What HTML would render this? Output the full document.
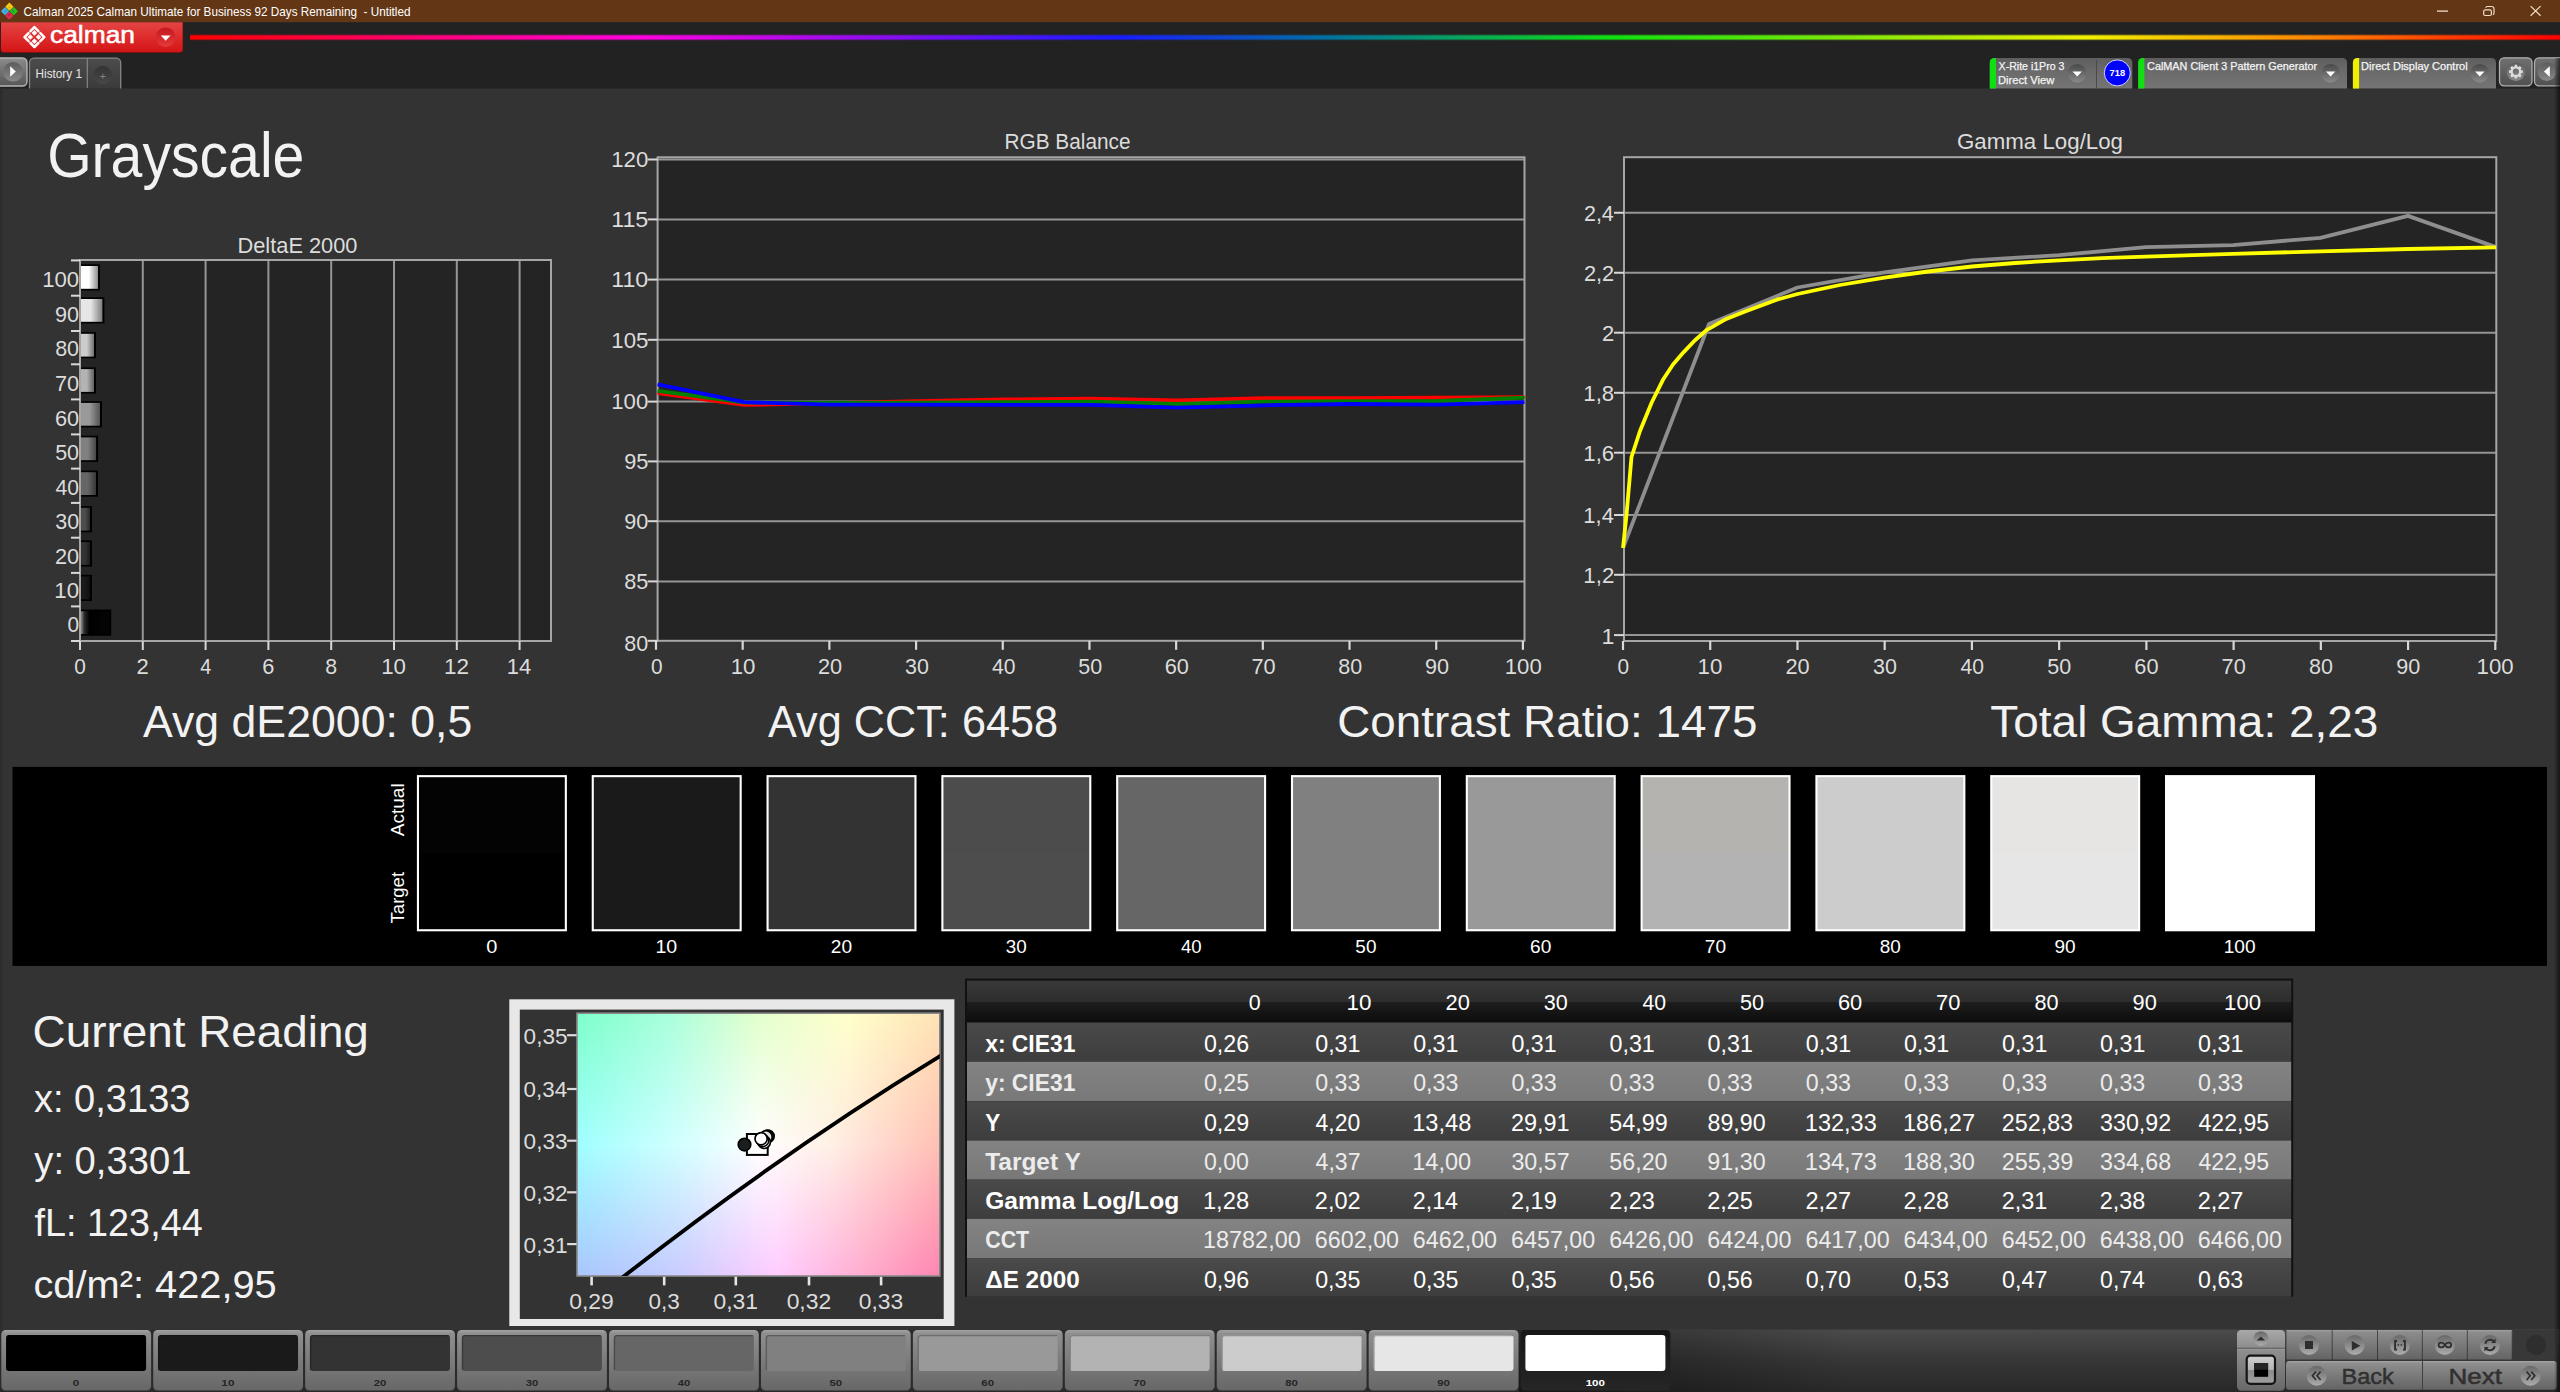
<!DOCTYPE html>
<html lang="en"><head><meta charset="utf-8"><title>Calman 2025 - Grayscale</title>
<style>html,body{margin:0;padding:0;background:#333333;overflow:hidden}svg{display:block}text{font-family:"Liberation Sans",sans-serif;white-space:pre}</style>
</head><body>
<svg width="2560" height="1392" viewBox="0 0 2560 1392">
<defs>
<linearGradient id="gRed" x1="0" y1="0" x2="0" y2="1"><stop offset="0" stop-color="#e44444"/><stop offset="0.5" stop-color="#de2c2c"/><stop offset="1" stop-color="#d31414"/></linearGradient>
<linearGradient id="gRedC" x1="0" y1="0" x2="0" y2="1"><stop offset="0" stop-color="#c41620"/><stop offset="1" stop-color="#e43a3a"/></linearGradient>
<linearGradient id="gRain" x1="0" y1="0" x2="1" y2="0"><stop offset="0" stop-color="#ff0000"/><stop offset="0.19" stop-color="#ff00e0"/><stop offset="0.39" stop-color="#1a1aff"/><stop offset="0.48" stop-color="#0070a0"/><stop offset="0.6" stop-color="#10e010"/><stop offset="0.8" stop-color="#f0f000"/><stop offset="0.9" stop-color="#ff8000"/><stop offset="1" stop-color="#ff0000"/></linearGradient>
<linearGradient id="gBtn" x1="0" y1="0" x2="0" y2="1"><stop offset="0" stop-color="#8c8c8c"/><stop offset="1" stop-color="#565656"/></linearGradient>
<linearGradient id="gBtnC" x1="0" y1="0" x2="0" y2="1"><stop offset="0" stop-color="#5c5c5c"/><stop offset="1" stop-color="#8a8a8a"/></linearGradient>
<linearGradient id="gTab" x1="0" y1="0" x2="0" y2="1"><stop offset="0" stop-color="#4c4c4c"/><stop offset="1" stop-color="#3a3a3a"/></linearGradient>
<linearGradient id="gPlus" x1="0" y1="0" x2="0" y2="1"><stop offset="0" stop-color="#333333"/><stop offset="1" stop-color="#484848"/></linearGradient>
<linearGradient id="gPanel" x1="0" y1="0" x2="0" y2="1"><stop offset="0" stop-color="#5e5e5e"/><stop offset="0.5" stop-color="#6c6c6c"/><stop offset="1" stop-color="#747474"/></linearGradient>
<linearGradient id="gDrop" x1="0" y1="0" x2="0" y2="1"><stop offset="0" stop-color="#484848"/><stop offset="1" stop-color="#8a8a8a"/></linearGradient>
<linearGradient id="gBtn2" x1="0" y1="0" x2="0" y2="1"><stop offset="0" stop-color="#707070"/><stop offset="1" stop-color="#505050"/></linearGradient>
<linearGradient id="gb0" x1="0" y1="0" x2="1" y2="0"><stop offset="0" stop-color="rgb(255,255,255)"/><stop offset="0.45" stop-color="rgb(255,255,255)"/><stop offset="1" stop-color="rgb(140,140,140)"/></linearGradient>
<linearGradient id="gb1" x1="0" y1="0" x2="1" y2="0"><stop offset="0" stop-color="rgb(230,230,230)"/><stop offset="0.45" stop-color="rgb(230,230,230)"/><stop offset="1" stop-color="rgb(126,126,126)"/></linearGradient>
<linearGradient id="gb2" x1="0" y1="0" x2="1" y2="0"><stop offset="0" stop-color="rgb(204,204,204)"/><stop offset="0.45" stop-color="rgb(204,204,204)"/><stop offset="1" stop-color="rgb(112,112,112)"/></linearGradient>
<linearGradient id="gb3" x1="0" y1="0" x2="1" y2="0"><stop offset="0" stop-color="rgb(179,179,179)"/><stop offset="0.45" stop-color="rgb(179,179,179)"/><stop offset="1" stop-color="rgb(98,98,98)"/></linearGradient>
<linearGradient id="gb4" x1="0" y1="0" x2="1" y2="0"><stop offset="0" stop-color="rgb(153,153,153)"/><stop offset="0.45" stop-color="rgb(153,153,153)"/><stop offset="1" stop-color="rgb(84,84,84)"/></linearGradient>
<linearGradient id="gb5" x1="0" y1="0" x2="1" y2="0"><stop offset="0" stop-color="rgb(128,128,128)"/><stop offset="0.45" stop-color="rgb(128,128,128)"/><stop offset="1" stop-color="rgb(70,70,70)"/></linearGradient>
<linearGradient id="gb6" x1="0" y1="0" x2="1" y2="0"><stop offset="0" stop-color="rgb(102,102,102)"/><stop offset="0.45" stop-color="rgb(102,102,102)"/><stop offset="1" stop-color="rgb(56,56,56)"/></linearGradient>
<linearGradient id="gb7" x1="0" y1="0" x2="1" y2="0"><stop offset="0" stop-color="rgb(77,77,77)"/><stop offset="0.45" stop-color="rgb(77,77,77)"/><stop offset="1" stop-color="rgb(42,42,42)"/></linearGradient>
<linearGradient id="gb8" x1="0" y1="0" x2="1" y2="0"><stop offset="0" stop-color="rgb(51,51,51)"/><stop offset="0.45" stop-color="rgb(51,51,51)"/><stop offset="1" stop-color="rgb(28,28,28)"/></linearGradient>
<linearGradient id="gb9" x1="0" y1="0" x2="1" y2="0"><stop offset="0" stop-color="rgb(26,26,26)"/><stop offset="0.45" stop-color="rgb(26,26,26)"/><stop offset="1" stop-color="rgb(14,14,14)"/></linearGradient>
<linearGradient id="gb10" x1="0" y1="0" x2="1" y2="0"><stop offset="0" stop-color="#8a8a8a"/><stop offset="0.12" stop-color="#2a2a2a"/><stop offset="0.3" stop-color="#000000"/><stop offset="1" stop-color="#050505"/></linearGradient>
<linearGradient id="cieH" x1="0" y1="0" x2="1" y2="0"><stop offset="0" stop-color="#7dffc9"/><stop offset="0.25" stop-color="#a8ffdc"/><stop offset="0.5" stop-color="#e2ffcd"/><stop offset="0.75" stop-color="#ffffcb"/><stop offset="1" stop-color="#ffe3b4"/></linearGradient>
<linearGradient id="cieB" x1="0" y1="0" x2="1" y2="0"><stop offset="0" stop-color="#a8c6ff"/><stop offset="0.28" stop-color="#c9ccff"/><stop offset="0.55" stop-color="#ffccff"/><stop offset="0.8" stop-color="#ffaacc"/><stop offset="1" stop-color="#ff85b2"/></linearGradient>
<linearGradient id="cieM" x1="0" y1="0" x2="1" y2="0"><stop offset="0" stop-color="#a0ffff"/><stop offset="0.3" stop-color="#d6ffff"/><stop offset="0.5" stop-color="#ffffff"/><stop offset="0.7" stop-color="#fff0e6"/><stop offset="1" stop-color="#ffc0b4"/></linearGradient>
<linearGradient id="mTop" x1="0" y1="0" x2="0" y2="1"><stop offset="0" stop-color="#fff" stop-opacity="1"/><stop offset="0.5" stop-color="#fff" stop-opacity="0"/></linearGradient>
<linearGradient id="mBot" x1="0" y1="0" x2="0" y2="1"><stop offset="0.5" stop-color="#fff" stop-opacity="0"/><stop offset="1" stop-color="#fff" stop-opacity="1"/></linearGradient>
<linearGradient id="thd" x1="0" y1="0" x2="0" y2="1"><stop offset="0" stop-color="#393939"/><stop offset="0.5" stop-color="#2d2d2d"/><stop offset="0.5" stop-color="#1e1e1e"/><stop offset="1" stop-color="#0c0c0c"/></linearGradient>
<linearGradient id="trD" x1="0" y1="0" x2="0" y2="1"><stop offset="0" stop-color="#4a4a4a"/><stop offset="1" stop-color="#3d3d3d"/></linearGradient>
<linearGradient id="trL" x1="0" y1="0" x2="0" y2="1"><stop offset="0" stop-color="#838383"/><stop offset="1" stop-color="#787878"/></linearGradient>
<linearGradient id="bbg" x1="0" y1="0" x2="0" y2="1"><stop offset="0" stop-color="#4b4b4b"/><stop offset="0.5" stop-color="#363636"/><stop offset="1" stop-color="#282828"/></linearGradient>
<linearGradient id="bfade" x1="0" y1="0" x2="1" y2="0"><stop offset="0" stop-color="#000" stop-opacity="0.45"/><stop offset="1" stop-color="#000" stop-opacity="0"/></linearGradient>
<linearGradient id="bbt" x1="0" y1="0" x2="0" y2="1"><stop offset="0" stop-color="#a2a2a2"/><stop offset="0.06" stop-color="#8e8e8e"/><stop offset="0.5" stop-color="#7c7c7c"/><stop offset="1" stop-color="#676767"/></linearGradient>
<linearGradient id="bsel" x1="0" y1="0" x2="0" y2="1"><stop offset="0" stop-color="#161616"/><stop offset="1" stop-color="#262626"/></linearGradient>
<linearGradient id="cbt" x1="0" y1="0" x2="0" y2="1"><stop offset="0" stop-color="#a0a0a0"/><stop offset="0.08" stop-color="#8c8c8c"/><stop offset="1" stop-color="#646464"/></linearGradient>
<linearGradient id="cci" x1="0" y1="0" x2="0" y2="1"><stop offset="0" stop-color="#686868"/><stop offset="1" stop-color="#acacac"/></linearGradient>
<linearGradient id="cbt2" x1="0" y1="0" x2="0" y2="1"><stop offset="0" stop-color="#a8a8a8"/><stop offset="0.3" stop-color="#8c8c8c"/><stop offset="0.31" stop-color="#909090"/><stop offset="1" stop-color="#686868"/></linearGradient>
<linearGradient id="stp" x1="0" y1="0" x2="0" y2="1"><stop offset="0" stop-color="#d0d0d0"/><stop offset="0.5" stop-color="#b4b4b4"/><stop offset="0.5" stop-color="#8c8c8c"/><stop offset="1" stop-color="#a0a0a0"/></linearGradient>
<linearGradient id="bn" x1="0" y1="0" x2="0" y2="1"><stop offset="0" stop-color="#a6a6a6"/><stop offset="0.08" stop-color="#8e8e8e"/><stop offset="1" stop-color="#646464"/></linearGradient>
<linearGradient id="rsh" x1="0" y1="0" x2="1" y2="0"><stop offset="0" stop-color="#000" stop-opacity="0"/><stop offset="1" stop-color="#000" stop-opacity="0.6"/></linearGradient>
</defs>
<rect x="0" y="0" width="2560" height="1392" fill="#333333"/>
<rect x="0" y="0" width="2560" height="22.3" fill="#633615"/>
<rect x="0" y="22.3" width="2560" height="66.2" fill="#222222"/>
<rect x="0" y="88.5" width="2.2" height="1241" fill="#2c2c2c"/>
<path d="M9.4 2.6L13.5 6.7L9.4 10.8L5.3 6.7Z" fill="#f4cf1e"/>
<path d="M5 7.1L9.1 11.2L5 15.3L0.9 11.2Z" fill="#3fb6ea"/>
<path d="M13.8 7.1L17.9 11.2L13.8 15.3L9.7 11.2Z" fill="#27c527"/>
<path d="M9.3 11.6L13.4 15.7L9.3 19.8L5.2 15.7Z" fill="#e22c58"/>
<path d="M9.4 5.9L10.9 7.4L9.4 8.9L7.9 7.4Z" fill="#e0b400"/>
<path d="M5.6 9.7L7.1 11.2L5.6 12.7L4.1 11.2Z" fill="#2aa0d8"/>
<path d="M13.2 9.7L14.7 11.2L13.2 12.7L11.7 11.2Z" fill="#14a814"/>
<path d="M9.3 13.5L10.8 15L9.3 16.5L7.8 15Z" fill="#cc1844"/>
<text x="23.5" y="16" font-size="12.4" fill="#ffffff" textLength="387" lengthAdjust="spacingAndGlyphs" xml:space="preserve">Calman 2025 Calman Ultimate for Business 92 Days Remaining  - Untitled</text>
<line x1="2437" y1="11.1" x2="2448" y2="11.1" stroke="#f2dcc6" stroke-width="1.3" />
<rect x="2483.7" y="9.9" width="7.7" height="5.6" rx="1.5" fill="none" stroke="#f2dcc6" stroke-width="1.2"/>
<path d="M2485.7 7.7a1.7 1.7 0 0 1 1.6-1.2h4.4a2.3 2.3 0 0 1 2.3 2.3v4.2a1.7 1.7 0 0 1-1.2 1.6" fill="none" stroke="#f2dcc6" stroke-width="1.2"/>
<path d="M2530.6 6.1l10 9.7M2540.6 6.1l-10 9.7" stroke="#f2dcc6" stroke-width="1.2" fill="none"/>
<path d="M0.5 22.3H183.3V49.5a3.5 3.5 0 0 1-3.5 3.5H4a3.5 3.5 0 0 1-3.5-3.5Z" fill="#5a1414"/>
<path d="M1 22.3H182.6V49a3.3 3.3 0 0 1-3.3 3.3H4.3A3.3 3.3 0 0 1 1 49Z" fill="url(#gRed)"/>
<path d="M34.4 30.35L36.95 32.9L34.4 35.45L31.85 32.9Z" fill="#ffffff" stroke="#ffffff" stroke-width="0.5" stroke-linejoin="round"/>
<path d="M30.25 34.5L32.8 37.05L30.25 39.6L27.7 37.05Z" fill="#ffffff" stroke="#ffffff" stroke-width="0.5" stroke-linejoin="round"/>
<path d="M38.55 34.5L41.1 37.05L38.55 39.6L36 37.05Z" fill="#ffffff" stroke="#ffffff" stroke-width="0.5" stroke-linejoin="round"/>
<path d="M34.4 38.65L36.95 41.2L34.4 43.75L31.85 41.2Z" fill="#ffffff" stroke="#ffffff" stroke-width="0.5" stroke-linejoin="round"/>
<path d="M30.4 31.1L34.4 27.1L38.4 31.1 M28.5 33.05L24.5 37.05L28.5 41.05 M40.3 33.05L44.3 37.05L40.3 41.05 M30.4 43L34.4 47L38.4 43" fill="none" stroke="#ffffff" stroke-width="2.5" stroke-linecap="round" stroke-linejoin="round"/>
<text x="50" y="43.4" font-size="24.6" fill="#ffffff" textLength="85" lengthAdjust="spacingAndGlyphs" stroke="#ffffff" stroke-width="0.55">calman</text>
<circle cx="165.7" cy="37.3" r="9.8" fill="url(#gRedC)"/>
<path d="M160.8 35.6h9.8l-4.9 5.2Z" fill="#ffffff"/>
<rect x="190" y="34.6" width="2370" height="5.6" fill="url(#gRain)" opacity="0.55"/>
<rect x="190" y="35.6" width="2370" height="3.6" fill="url(#gRain)"/>
<path d="M-2 58H22.5a4.5 4.5 0 0 1 4.5 4.5V81.5a4.5 4.5 0 0 1-4.5 4.5H-2Z" fill="url(#gBtn)" stroke="#b6b6b6" stroke-width="1.4"/>
<circle cx="13" cy="71.8" r="9.8" fill="url(#gBtnC)"/>
<path d="M10.2 66.3l5.6 5.2l-5.6 5.2Z" fill="#ffffff"/>
<path d="M29.5 88.5V62.6a4.5 4.5 0 0 1 4.5-4.5H116.2a4.5 4.5 0 0 1 4.5 4.5V88.5Z" fill="url(#gTab)"/>
<path d="M29.5 88.5V62.6a4.5 4.5 0 0 1 4.5-4.5H116.2a4.5 4.5 0 0 1 4.5 4.5V88.5" fill="none" stroke="#868686" stroke-width="1.3"/>
<line x1="87.3" y1="58.6" x2="87.3" y2="88" stroke="#868686" stroke-width="1.2" />
<text x="35.5" y="78.2" font-size="12.6" fill="#e6e6e6" textLength="46.5" lengthAdjust="spacingAndGlyphs">History 1</text>
<circle cx="102.7" cy="75" r="9.3" fill="url(#gPlus)"/>
<text x="102.7" y="79.6" font-size="10.5" fill="#848484" text-anchor="middle">+</text>
<path d="M1989.8 88.5V62.5a4.5 4.5 0 0 1 4.5-4.5H2127.8a4.5 4.5 0 0 1 4.5 4.5V88.5Z" fill="url(#gPanel)"/>
<path d="M1989.8 88.5V62.5a4.5 4.5 0 0 1 4.5-4.5H1996V88.5Z" fill="#10e010"/>
<text x="1998.59" y="69.5" font-size="11" fill="#f4f4f4" textLength="65.8329" lengthAdjust="spacingAndGlyphs" stroke="#f4f4f4" stroke-width="0.25">X-Rite i1Pro 3</text>
<text x="1997.9" y="83.6" font-size="11" fill="#f4f4f4" textLength="56.4828" lengthAdjust="spacingAndGlyphs" stroke="#f4f4f4" stroke-width="0.25">Direct View</text>
<circle cx="2077.2" cy="73.2" r="9.3" fill="url(#gDrop)"/>
<path d="M2072.5 71.6h9.4l-4.7 4.8Z" fill="#ffffff"/>
<line x1="2096.5" y1="60" x2="2096.5" y2="88.5" stroke="#4a4a4a" stroke-width="1" />
<circle cx="2117.3" cy="72.9" r="13" fill="#0000ff" stroke="#d0d0ff" stroke-width="1"/>
<text x="2109.62" y="76" font-size="8.8" fill="#ffffff" font-weight="bold" textLength="15.6423" lengthAdjust="spacingAndGlyphs">718</text>
<path d="M2138.2 88.5V62.5a4.5 4.5 0 0 1 4.5-4.5H2342.5a4.5 4.5 0 0 1 4.5 4.5V88.5Z" fill="url(#gPanel)"/>
<path d="M2138.2 88.5V62.5a4.5 4.5 0 0 1 4.5-4.5H2144.4V88.5Z" fill="#10e010"/>
<text x="2147.06" y="69.5" font-size="11" fill="#f4f4f4" textLength="170.092" lengthAdjust="spacingAndGlyphs" stroke="#f4f4f4" stroke-width="0.25">CalMAN Client 3 Pattern Generator</text>
<circle cx="2330.6" cy="73.2" r="9.3" fill="url(#gDrop)"/>
<path d="M2325.9 71.6h9.4l-4.7 4.8Z" fill="#ffffff"/>
<path d="M2352.9 88.5V62.5a4.5 4.5 0 0 1 4.5-4.5H2491.5a4.5 4.5 0 0 1 4.5 4.5V88.5Z" fill="url(#gPanel)"/>
<path d="M2352.9 88.5V62.5a4.5 4.5 0 0 1 4.5-4.5H2359.1V88.5Z" fill="#f0f000"/>
<text x="2361.12" y="69.5" font-size="11" fill="#f4f4f4" textLength="106.539" lengthAdjust="spacingAndGlyphs" stroke="#f4f4f4" stroke-width="0.25">Direct Display Control</text>
<circle cx="2479.8" cy="73.2" r="9.3" fill="url(#gDrop)"/>
<path d="M2475.1 71.6h9.4l-4.7 4.8Z" fill="#ffffff"/>
<rect x="2499.5" y="57.8" width="32.5" height="28" rx="4.5" fill="url(#gBtn2)" stroke="#b0b0b0" stroke-width="1.3"/>
<circle cx="2515.9" cy="71.7" r="9.3" fill="url(#gBtnC)"/>
<path d="M2522.80 70.52L2522.80 72.88L2520.95 73.32L2520.61 74.13L2521.62 75.74L2519.94 77.42L2518.33 76.41L2517.52 76.75L2517.08 78.60L2514.72 78.60L2514.28 76.75L2513.47 76.41L2511.86 77.42L2510.18 75.74L2511.19 74.13L2510.85 73.32L2509.00 72.88L2509.00 70.52L2510.85 70.08L2511.19 69.27L2510.18 67.66L2511.86 65.98L2513.47 66.99L2514.28 66.65L2514.72 64.80L2517.08 64.80L2517.52 66.65L2518.33 66.99L2519.94 65.98L2521.62 67.66L2520.61 69.27L2520.95 70.08Z M2519 71.7a3.1 3.1 0 1 0 -6.2 0a3.1 3.1 0 1 0 6.2 0Z" fill="#dcdcdc" fill-rule="evenodd"/>
<rect x="2534.5" y="57.8" width="34" height="28" rx="4.5" fill="url(#gBtn2)" stroke="#b0b0b0" stroke-width="1.3"/>
<circle cx="2546.8" cy="71.7" r="9.3" fill="url(#gBtnC)"/>
<path d="M2549.8 66.3l-5.8 5.3l5.8 5.3Z" fill="#ffffff"/>
<text x="47.1429" y="177" font-size="62.6" fill="#f2f2f2" textLength="257.232" lengthAdjust="spacingAndGlyphs">Grayscale</text>
<rect x="80" y="260" width="471" height="381" fill="#242424"/>
<text x="297.5" y="252.6" font-size="21.8" fill="#dcdcdc" text-anchor="middle" textLength="120" lengthAdjust="spacingAndGlyphs">DeltaE 2000</text>
<line x1="142.8" y1="260" x2="142.8" y2="641" stroke="#969696" stroke-width="2" />
<line x1="205.6" y1="260" x2="205.6" y2="641" stroke="#969696" stroke-width="2" />
<line x1="268.4" y1="260" x2="268.4" y2="641" stroke="#969696" stroke-width="2" />
<line x1="331.2" y1="260" x2="331.2" y2="641" stroke="#969696" stroke-width="2" />
<line x1="394" y1="260" x2="394" y2="641" stroke="#969696" stroke-width="2" />
<line x1="456.8" y1="260" x2="456.8" y2="641" stroke="#969696" stroke-width="2" />
<line x1="519.6" y1="260" x2="519.6" y2="641" stroke="#969696" stroke-width="2" />
<path d="M80 641V260H551V641" fill="none" stroke="#a6a6a6" stroke-width="2"/>
<line x1="79" y1="641" x2="552" y2="641" stroke="#a6a6a6" stroke-width="2" />
<line x1="71" y1="260.4" x2="80" y2="260.4" stroke="#d8d8d8" stroke-width="2" />
<rect x="81" y="264.3" width="19" height="26.2" fill="#000000"/>
<rect x="81" y="266" width="17" height="22.8" fill="url(#gb0)"/>
<text x="42.1888" y="286.85" font-size="21.8" fill="#dcdcdc" textLength="36.9644" lengthAdjust="spacingAndGlyphs">100</text>
<line x1="71" y1="295.7" x2="80" y2="295.7" stroke="#d8d8d8" stroke-width="2" />
<rect x="81" y="297.3" width="23.4" height="26.2" fill="#000000"/>
<rect x="81" y="299" width="21.4" height="22.8" fill="url(#gb1)"/>
<text x="55.0399" y="322.15" font-size="21.8" fill="#dcdcdc" textLength="24.0681" lengthAdjust="spacingAndGlyphs">90</text>
<line x1="71" y1="331" x2="80" y2="331" stroke="#d8d8d8" stroke-width="2" />
<rect x="81" y="332.1" width="15" height="26.2" fill="#000000"/>
<rect x="81" y="333.8" width="13" height="22.8" fill="url(#gb2)"/>
<text x="55.1523" y="356.45" font-size="21.8" fill="#dcdcdc" textLength="23.9518" lengthAdjust="spacingAndGlyphs">80</text>
<line x1="71" y1="364.3" x2="80" y2="364.3" stroke="#d8d8d8" stroke-width="2" />
<rect x="81" y="367.4" width="15" height="26.2" fill="#000000"/>
<rect x="81" y="369.1" width="13" height="22.8" fill="url(#gb3)"/>
<text x="54.9265" y="390.65" font-size="21.8" fill="#dcdcdc" textLength="24.1855" lengthAdjust="spacingAndGlyphs">70</text>
<line x1="71" y1="399.4" x2="80" y2="399.4" stroke="#d8d8d8" stroke-width="2" />
<rect x="81" y="401.2" width="21" height="26.2" fill="#000000"/>
<rect x="81" y="402.9" width="19" height="22.8" fill="url(#gb4)"/>
<text x="54.9265" y="425.7" font-size="21.8" fill="#dcdcdc" textLength="24.1855" lengthAdjust="spacingAndGlyphs">60</text>
<line x1="71" y1="434.4" x2="80" y2="434.4" stroke="#d8d8d8" stroke-width="2" />
<rect x="81" y="435.7" width="17.1" height="26.2" fill="#000000"/>
<rect x="81" y="437.4" width="15.1" height="22.8" fill="url(#gb5)"/>
<text x="55.1523" y="460.3" font-size="21.8" fill="#dcdcdc" textLength="23.9518" lengthAdjust="spacingAndGlyphs">50</text>
<line x1="71" y1="468.6" x2="80" y2="468.6" stroke="#d8d8d8" stroke-width="2" />
<rect x="81" y="470.5" width="17" height="26.2" fill="#000000"/>
<rect x="81" y="472.2" width="15" height="22.8" fill="url(#gb6)"/>
<text x="55.5911" y="494.55" font-size="21.8" fill="#dcdcdc" textLength="23.4978" lengthAdjust="spacingAndGlyphs">40</text>
<line x1="71" y1="502.9" x2="80" y2="502.9" stroke="#d8d8d8" stroke-width="2" />
<rect x="81" y="506.1" width="11" height="26.2" fill="#000000"/>
<rect x="81" y="507.8" width="9" height="22.8" fill="url(#gb7)"/>
<text x="55.2636" y="529.1" font-size="21.8" fill="#dcdcdc" textLength="23.8367" lengthAdjust="spacingAndGlyphs">30</text>
<line x1="71" y1="537.7" x2="80" y2="537.7" stroke="#d8d8d8" stroke-width="2" />
<rect x="81" y="540.4" width="11" height="26.2" fill="#000000"/>
<rect x="81" y="542.1" width="9" height="22.8" fill="url(#gb8)"/>
<text x="54.9265" y="564.1" font-size="21.8" fill="#dcdcdc" textLength="24.1855" lengthAdjust="spacingAndGlyphs">20</text>
<line x1="71" y1="572.9" x2="80" y2="572.9" stroke="#d8d8d8" stroke-width="2" />
<rect x="81" y="574.8" width="11" height="26.2" fill="#000000"/>
<rect x="81" y="576.5" width="9" height="22.8" fill="url(#gb9)"/>
<text x="54.3421" y="598.45" font-size="21.8" fill="#dcdcdc" textLength="24.7901" lengthAdjust="spacingAndGlyphs">10</text>
<line x1="71" y1="606.4" x2="80" y2="606.4" stroke="#d8d8d8" stroke-width="2" />
<rect x="81" y="609.55" width="30.2" height="26.2" fill="#000000"/>
<rect x="81" y="611.25" width="28.2" height="22.8" fill="url(#gb10)"/>
<text x="67.4463" y="632.45" font-size="21.8" fill="#dcdcdc" textLength="11.6087" lengthAdjust="spacingAndGlyphs">0</text>
<line x1="71" y1="641" x2="80" y2="641" stroke="#d8d8d8" stroke-width="2" />
<line x1="80" y1="641" x2="80" y2="650" stroke="#d8d8d8" stroke-width="2" />
<text x="74.2079" y="673.5" font-size="21.8" fill="#dcdcdc" textLength="11.6087" lengthAdjust="spacingAndGlyphs">0</text>
<line x1="142.8" y1="641" x2="142.8" y2="650" stroke="#d8d8d8" stroke-width="2" />
<text x="136.638" y="673.5" font-size="21.8" fill="#dcdcdc" textLength="12.2397" lengthAdjust="spacingAndGlyphs">2</text>
<line x1="205.6" y1="641" x2="205.6" y2="650" stroke="#d8d8d8" stroke-width="2" />
<text x="200.141" y="673.5" font-size="21.8" fill="#dcdcdc" textLength="11.0397" lengthAdjust="spacingAndGlyphs">4</text>
<line x1="268.4" y1="641" x2="268.4" y2="650" stroke="#d8d8d8" stroke-width="2" />
<text x="262.25" y="673.5" font-size="21.8" fill="#dcdcdc" textLength="12.108" lengthAdjust="spacingAndGlyphs">6</text>
<line x1="331.2" y1="641" x2="331.2" y2="650" stroke="#d8d8d8" stroke-width="2" />
<text x="325.286" y="673.5" font-size="21.8" fill="#dcdcdc" textLength="11.8531" lengthAdjust="spacingAndGlyphs">8</text>
<line x1="394" y1="641" x2="394" y2="650" stroke="#d8d8d8" stroke-width="2" />
<text x="381.185" y="673.5" font-size="21.8" fill="#dcdcdc" textLength="24.7901" lengthAdjust="spacingAndGlyphs">10</text>
<line x1="456.8" y1="641" x2="456.8" y2="650" stroke="#d8d8d8" stroke-width="2" />
<text x="443.968" y="673.5" font-size="21.8" fill="#dcdcdc" textLength="25.0405" lengthAdjust="spacingAndGlyphs">12</text>
<line x1="519.6" y1="641" x2="519.6" y2="650" stroke="#d8d8d8" stroke-width="2" />
<text x="506.802" y="673.5" font-size="21.8" fill="#dcdcdc" textLength="24.5447" lengthAdjust="spacingAndGlyphs">14</text>
<rect x="657.6" y="157.3" width="866.9" height="483.5" fill="#242424"/>
<text x="1067.5" y="149.3" font-size="21.8" fill="#dcdcdc" text-anchor="middle" textLength="126" lengthAdjust="spacingAndGlyphs">RGB Balance</text>
<line x1="657.6" y1="581.4" x2="1524.5" y2="581.4" stroke="#969696" stroke-width="2" />
<line x1="657.6" y1="521.2" x2="1524.5" y2="521.2" stroke="#969696" stroke-width="2" />
<line x1="657.6" y1="461.4" x2="1524.5" y2="461.4" stroke="#969696" stroke-width="2" />
<line x1="657.6" y1="401.6" x2="1524.5" y2="401.6" stroke="#969696" stroke-width="2" />
<line x1="657.6" y1="339.8" x2="1524.5" y2="339.8" stroke="#969696" stroke-width="2" />
<line x1="657.6" y1="279.6" x2="1524.5" y2="279.6" stroke="#969696" stroke-width="2" />
<line x1="657.6" y1="219.4" x2="1524.5" y2="219.4" stroke="#969696" stroke-width="2" />
<line x1="657.6" y1="159.5" x2="1524.5" y2="159.5" stroke="#969696" stroke-width="2" />
<rect x="657.6" y="157.3" width="866.9" height="483.5" fill="none" stroke="#a6a6a6" stroke-width="2"/>
<line x1="647.6" y1="640.8" x2="657.6" y2="640.8" stroke="#d8d8d8" stroke-width="2" />
<text x="624.252" y="651" font-size="21.8" fill="#dcdcdc" textLength="23.9518" lengthAdjust="spacingAndGlyphs">80</text>
<line x1="647.6" y1="581.4" x2="657.6" y2="581.4" stroke="#d8d8d8" stroke-width="2" />
<text x="624.248" y="589.1" font-size="21.8" fill="#dcdcdc" textLength="24.0681" lengthAdjust="spacingAndGlyphs">85</text>
<line x1="647.6" y1="521.2" x2="657.6" y2="521.2" stroke="#d8d8d8" stroke-width="2" />
<text x="624.14" y="528.9" font-size="21.8" fill="#dcdcdc" textLength="24.0681" lengthAdjust="spacingAndGlyphs">90</text>
<line x1="647.6" y1="461.4" x2="657.6" y2="461.4" stroke="#d8d8d8" stroke-width="2" />
<text x="624.135" y="469.1" font-size="21.8" fill="#dcdcdc" textLength="24.1855" lengthAdjust="spacingAndGlyphs">95</text>
<line x1="647.6" y1="401.6" x2="657.6" y2="401.6" stroke="#d8d8d8" stroke-width="2" />
<text x="611.289" y="409.3" font-size="21.8" fill="#dcdcdc" textLength="36.9644" lengthAdjust="spacingAndGlyphs">100</text>
<line x1="647.6" y1="339.8" x2="657.6" y2="339.8" stroke="#d8d8d8" stroke-width="2" />
<text x="611.283" y="347.5" font-size="21.8" fill="#dcdcdc" textLength="37.0837" lengthAdjust="spacingAndGlyphs">105</text>
<line x1="647.6" y1="279.6" x2="657.6" y2="279.6" stroke="#d8d8d8" stroke-width="2" />
<text x="611.211" y="287.3" font-size="21.8" fill="#dcdcdc" textLength="36.9851" lengthAdjust="spacingAndGlyphs">110</text>
<line x1="647.6" y1="219.4" x2="657.6" y2="219.4" stroke="#d8d8d8" stroke-width="2" />
<text x="611.205" y="227.1" font-size="21.8" fill="#dcdcdc" textLength="37.1101" lengthAdjust="spacingAndGlyphs">115</text>
<line x1="647.6" y1="159.5" x2="657.6" y2="159.5" stroke="#d8d8d8" stroke-width="2" />
<text x="611.289" y="167.2" font-size="21.8" fill="#dcdcdc" textLength="36.9644" lengthAdjust="spacingAndGlyphs">120</text>
<line x1="656" y1="640.8" x2="656" y2="649.8" stroke="#d8d8d8" stroke-width="2.2" />
<text x="651.008" y="673.7" font-size="21.8" fill="#dcdcdc" textLength="11.6087" lengthAdjust="spacingAndGlyphs">0</text>
<line x1="742.69" y1="640.8" x2="742.69" y2="649.8" stroke="#d8d8d8" stroke-width="2.2" />
<text x="730.675" y="673.7" font-size="21.8" fill="#dcdcdc" textLength="24.7901" lengthAdjust="spacingAndGlyphs">10</text>
<line x1="829.38" y1="640.8" x2="829.38" y2="649.8" stroke="#d8d8d8" stroke-width="2.2" />
<text x="817.95" y="673.7" font-size="21.8" fill="#dcdcdc" textLength="24.1855" lengthAdjust="spacingAndGlyphs">20</text>
<line x1="916.07" y1="640.8" x2="916.07" y2="649.8" stroke="#d8d8d8" stroke-width="2.2" />
<text x="904.977" y="673.7" font-size="21.8" fill="#dcdcdc" textLength="23.8367" lengthAdjust="spacingAndGlyphs">30</text>
<line x1="1002.76" y1="640.8" x2="1002.76" y2="649.8" stroke="#d8d8d8" stroke-width="2.2" />
<text x="991.994" y="673.7" font-size="21.8" fill="#dcdcdc" textLength="23.4978" lengthAdjust="spacingAndGlyphs">40</text>
<line x1="1089.45" y1="640.8" x2="1089.45" y2="649.8" stroke="#d8d8d8" stroke-width="2.2" />
<text x="1078.25" y="673.7" font-size="21.8" fill="#dcdcdc" textLength="23.9518" lengthAdjust="spacingAndGlyphs">50</text>
<line x1="1176.14" y1="640.8" x2="1176.14" y2="649.8" stroke="#d8d8d8" stroke-width="2.2" />
<text x="1164.71" y="673.7" font-size="21.8" fill="#dcdcdc" textLength="24.1855" lengthAdjust="spacingAndGlyphs">60</text>
<line x1="1262.83" y1="640.8" x2="1262.83" y2="649.8" stroke="#d8d8d8" stroke-width="2.2" />
<text x="1251.4" y="673.7" font-size="21.8" fill="#dcdcdc" textLength="24.1855" lengthAdjust="spacingAndGlyphs">70</text>
<line x1="1349.52" y1="640.8" x2="1349.52" y2="649.8" stroke="#d8d8d8" stroke-width="2.2" />
<text x="1338.32" y="673.7" font-size="21.8" fill="#dcdcdc" textLength="23.9518" lengthAdjust="spacingAndGlyphs">80</text>
<line x1="1436.21" y1="640.8" x2="1436.21" y2="649.8" stroke="#d8d8d8" stroke-width="2.2" />
<text x="1424.89" y="673.7" font-size="21.8" fill="#dcdcdc" textLength="24.0681" lengthAdjust="spacingAndGlyphs">90</text>
<line x1="1522.9" y1="640.8" x2="1522.9" y2="649.8" stroke="#d8d8d8" stroke-width="2.2" />
<text x="1504.81" y="673.7" font-size="21.8" fill="#dcdcdc" textLength="36.9644" lengthAdjust="spacingAndGlyphs">100</text>
<clipPath id="cpRGB"><rect x="656.6" y="157.3" width="868.9" height="483.5"/></clipPath>
<polyline points="657.6,393.2 744.3,404.9 831.0,403.2 917.7,401.2 1004.4,399.5 1091.0,398.6 1177.7,400.3 1264.4,398.1 1351.1,398.1 1437.8,397.7 1524.5,397.2" fill="none" stroke="#ff0000" stroke-width="3.8" stroke-linejoin="round" clip-path="url(#cpRGB)"/>
<polyline points="657.6,390.9 744.3,402.6 831.0,403.0 917.7,402.6 1004.4,402.2 1091.0,401.7 1177.7,404.0 1264.4,401.7 1351.1,401.2 1437.8,401.0 1524.5,397.7" fill="none" stroke="#008000" stroke-width="3.8" stroke-linejoin="round" clip-path="url(#cpRGB)"/>
<polyline points="657.6,384.3 744.3,402.2 831.0,404.6 917.7,404.6 1004.4,404.9 1091.0,404.9 1177.7,407.6 1264.4,405.3 1351.1,404.0 1437.8,404.6 1524.5,402.2" fill="none" stroke="#0000ff" stroke-width="3.8" stroke-linejoin="round" clip-path="url(#cpRGB)"/>
<rect x="1624" y="157.2" width="872.3" height="483.8" fill="#242424"/>
<text x="2040" y="149.3" font-size="21.8" fill="#dcdcdc" text-anchor="middle" textLength="166" lengthAdjust="spacingAndGlyphs">Gamma Log/Log</text>
<line x1="1624" y1="212.75" x2="2496.3" y2="212.75" stroke="#969696" stroke-width="2" />
<line x1="1624" y1="272.75" x2="2496.3" y2="272.75" stroke="#969696" stroke-width="2" />
<line x1="1624" y1="332.7" x2="2496.3" y2="332.7" stroke="#969696" stroke-width="2" />
<line x1="1624" y1="392.8" x2="2496.3" y2="392.8" stroke="#969696" stroke-width="2" />
<line x1="1624" y1="452.7" x2="2496.3" y2="452.7" stroke="#969696" stroke-width="2" />
<line x1="1624" y1="515" x2="2496.3" y2="515" stroke="#969696" stroke-width="2" />
<line x1="1624" y1="574.8" x2="2496.3" y2="574.8" stroke="#969696" stroke-width="2" />
<line x1="1624" y1="635.1" x2="2496.3" y2="635.1" stroke="#969696" stroke-width="2" />
<rect x="1624" y="157.2" width="872.3" height="483.8" fill="none" stroke="#a6a6a6" stroke-width="2"/>
<line x1="1614" y1="212.75" x2="1624" y2="212.75" stroke="#d8d8d8" stroke-width="2" />
<text x="1583.95" y="221.15" font-size="21.8" fill="#dcdcdc" textLength="29.8904" lengthAdjust="spacingAndGlyphs">2,4</text>
<line x1="1614" y1="272.75" x2="1624" y2="272.75" stroke="#d8d8d8" stroke-width="2" />
<text x="1583.93" y="281.15" font-size="21.8" fill="#dcdcdc" textLength="30.352" lengthAdjust="spacingAndGlyphs">2,2</text>
<line x1="1614" y1="332.7" x2="1624" y2="332.7" stroke="#d8d8d8" stroke-width="2" />
<text x="1602.08" y="341.1" font-size="21.8" fill="#dcdcdc" textLength="12.2397" lengthAdjust="spacingAndGlyphs">2</text>
<line x1="1614" y1="392.8" x2="1624" y2="392.8" stroke="#d8d8d8" stroke-width="2" />
<text x="1583.36" y="401.2" font-size="21.8" fill="#dcdcdc" textLength="30.8281" lengthAdjust="spacingAndGlyphs">1,8</text>
<line x1="1614" y1="452.7" x2="1624" y2="452.7" stroke="#d8d8d8" stroke-width="2" />
<text x="1583.36" y="461.1" font-size="21.8" fill="#dcdcdc" textLength="30.8281" lengthAdjust="spacingAndGlyphs">1,6</text>
<line x1="1614" y1="515" x2="1624" y2="515" stroke="#d8d8d8" stroke-width="2" />
<text x="1583.38" y="523.4" font-size="21.8" fill="#dcdcdc" textLength="30.4696" lengthAdjust="spacingAndGlyphs">1,4</text>
<line x1="1614" y1="574.8" x2="1624" y2="574.8" stroke="#d8d8d8" stroke-width="2" />
<text x="1583.36" y="583.2" font-size="21.8" fill="#dcdcdc" textLength="30.9495" lengthAdjust="spacingAndGlyphs">1,2</text>
<line x1="1614" y1="635.1" x2="1624" y2="635.1" stroke="#d8d8d8" stroke-width="2" />
<text x="1601.43" y="643.5" font-size="21.8" fill="#dcdcdc" textLength="12.9431" lengthAdjust="spacingAndGlyphs">1</text>
<line x1="1623" y1="641" x2="1623" y2="650" stroke="#d8d8d8" stroke-width="2.2" />
<text x="1617.41" y="673.7" font-size="21.8" fill="#dcdcdc" textLength="11.6087" lengthAdjust="spacingAndGlyphs">0</text>
<line x1="1710.23" y1="641" x2="1710.23" y2="650" stroke="#d8d8d8" stroke-width="2.2" />
<text x="1697.62" y="673.7" font-size="21.8" fill="#dcdcdc" textLength="24.7901" lengthAdjust="spacingAndGlyphs">10</text>
<line x1="1797.46" y1="641" x2="1797.46" y2="650" stroke="#d8d8d8" stroke-width="2.2" />
<text x="1785.43" y="673.7" font-size="21.8" fill="#dcdcdc" textLength="24.1855" lengthAdjust="spacingAndGlyphs">20</text>
<line x1="1884.69" y1="641" x2="1884.69" y2="650" stroke="#d8d8d8" stroke-width="2.2" />
<text x="1873" y="673.7" font-size="21.8" fill="#dcdcdc" textLength="23.8367" lengthAdjust="spacingAndGlyphs">30</text>
<line x1="1971.92" y1="641" x2="1971.92" y2="650" stroke="#d8d8d8" stroke-width="2.2" />
<text x="1960.55" y="673.7" font-size="21.8" fill="#dcdcdc" textLength="23.4978" lengthAdjust="spacingAndGlyphs">40</text>
<line x1="2059.15" y1="641" x2="2059.15" y2="650" stroke="#d8d8d8" stroke-width="2.2" />
<text x="2047.35" y="673.7" font-size="21.8" fill="#dcdcdc" textLength="23.9518" lengthAdjust="spacingAndGlyphs">50</text>
<line x1="2146.38" y1="641" x2="2146.38" y2="650" stroke="#d8d8d8" stroke-width="2.2" />
<text x="2134.35" y="673.7" font-size="21.8" fill="#dcdcdc" textLength="24.1855" lengthAdjust="spacingAndGlyphs">60</text>
<line x1="2233.61" y1="641" x2="2233.61" y2="650" stroke="#d8d8d8" stroke-width="2.2" />
<text x="2221.58" y="673.7" font-size="21.8" fill="#dcdcdc" textLength="24.1855" lengthAdjust="spacingAndGlyphs">70</text>
<line x1="2320.84" y1="641" x2="2320.84" y2="650" stroke="#d8d8d8" stroke-width="2.2" />
<text x="2309.04" y="673.7" font-size="21.8" fill="#dcdcdc" textLength="23.9518" lengthAdjust="spacingAndGlyphs">80</text>
<line x1="2408.07" y1="641" x2="2408.07" y2="650" stroke="#d8d8d8" stroke-width="2.2" />
<text x="2396.15" y="673.7" font-size="21.8" fill="#dcdcdc" textLength="24.0681" lengthAdjust="spacingAndGlyphs">90</text>
<line x1="2495.3" y1="641" x2="2495.3" y2="650" stroke="#d8d8d8" stroke-width="2.2" />
<text x="2476.61" y="673.7" font-size="21.8" fill="#dcdcdc" textLength="36.9644" lengthAdjust="spacingAndGlyphs">100</text>
<clipPath id="cpG"><rect x="1621" y="157.2" width="876.3" height="483.8"/></clipPath>
<polyline points="1623.0,548.0 1709.0,324.0 1797.5,287.5 1884.5,272.4 1972.0,260.3 2059.0,255.2 2146.0,247.1 2233.0,245.1 2320.5,237.8 2408.0,215.9 2496.0,247.1" fill="none" stroke="#8e8e8e" stroke-width="3.8" stroke-linejoin="round" clip-path="url(#cpG)"/>
<polyline points="1623.0,548.0 1626.5,515.0 1631.5,457.0 1640.0,431.0 1651.7,402.5 1663.3,379.2 1673.0,364.5 1683.7,352.1 1695.0,340.2 1707.0,329.8 1725.0,319.6 1745.8,311.3 1776.8,299.7 1797.5,294.0 1840.0,285.0 1884.5,277.7 1928.0,271.5 1972.0,266.5 2015.0,263.0 2059.0,260.3 2102.0,258.2 2146.0,256.6 2233.0,253.8 2320.5,251.3 2408.0,249.0 2496.0,247.3" fill="none" stroke="#ffff00" stroke-width="3.8" stroke-linejoin="round" clip-path="url(#cpG)"/>
<text x="143" y="737" font-size="44.7" fill="#f2f2f2" textLength="329.359" lengthAdjust="spacingAndGlyphs">Avg dE2000: 0,5</text>
<text x="768" y="737" font-size="44.7" fill="#f2f2f2" textLength="290.145" lengthAdjust="spacingAndGlyphs">Avg CCT: 6458</text>
<text x="1337.21" y="737" font-size="44.7" fill="#f2f2f2" textLength="420.216" lengthAdjust="spacingAndGlyphs">Contrast Ratio: 1475</text>
<text x="1990.38" y="737" font-size="44.7" fill="#f2f2f2" textLength="387.909" lengthAdjust="spacingAndGlyphs">Total Gamma: 2,23</text>
<rect x="12.5" y="766.9" width="2534.5" height="199" fill="#000000"/>
<rect x="417.9" y="776" width="148" height="154.4" fill="#000000"/>
<rect x="417.9" y="776" width="148" height="77" fill="#030304"/>
<rect x="417.95" y="776.15" width="147.9" height="154.1" fill="none" stroke="#ffffff" stroke-width="2.1"/>
<text x="486.35" y="953" font-size="18.1" fill="#ffffff" textLength="11.1234" lengthAdjust="spacingAndGlyphs">0</text>
<rect x="592.71" y="776" width="148" height="154.4" fill="#1a1a1a"/>
<rect x="592.71" y="776" width="148" height="77" fill="#1a1a1a"/>
<rect x="592.76" y="776.15" width="147.9" height="154.1" fill="none" stroke="#ffffff" stroke-width="2.1"/>
<text x="655.44" y="953" font-size="18.1" fill="#ffffff" textLength="21.8019" lengthAdjust="spacingAndGlyphs">10</text>
<rect x="767.52" y="776" width="148" height="154.4" fill="#333333"/>
<rect x="767.52" y="776" width="148" height="77" fill="#333333"/>
<rect x="767.57" y="776.15" width="147.9" height="154.1" fill="none" stroke="#ffffff" stroke-width="2.1"/>
<text x="830.764" y="953" font-size="18.1" fill="#ffffff" textLength="21.2702" lengthAdjust="spacingAndGlyphs">20</text>
<rect x="942.33" y="776" width="148" height="154.4" fill="#4d4d4d"/>
<rect x="942.33" y="776" width="148" height="77" fill="#4c4c4d"/>
<rect x="942.38" y="776.15" width="147.9" height="154.1" fill="none" stroke="#ffffff" stroke-width="2.1"/>
<text x="1005.87" y="953" font-size="18.1" fill="#ffffff" textLength="20.9634" lengthAdjust="spacingAndGlyphs">30</text>
<rect x="1117.14" y="776" width="148" height="154.4" fill="#666666"/>
<rect x="1117.14" y="776" width="148" height="77" fill="#666666"/>
<rect x="1117.19" y="776.15" width="147.9" height="154.1" fill="none" stroke="#ffffff" stroke-width="2.1"/>
<text x="1180.97" y="953" font-size="18.1" fill="#ffffff" textLength="20.6653" lengthAdjust="spacingAndGlyphs">40</text>
<rect x="1291.95" y="776" width="148" height="154.4" fill="#808080"/>
<rect x="1291.95" y="776" width="148" height="77" fill="#808080"/>
<rect x="1292" y="776.15" width="147.9" height="154.1" fill="none" stroke="#ffffff" stroke-width="2.1"/>
<text x="1355.39" y="953" font-size="18.1" fill="#ffffff" textLength="21.0647" lengthAdjust="spacingAndGlyphs">50</text>
<rect x="1466.76" y="776" width="148" height="154.4" fill="#999999"/>
<rect x="1466.76" y="776" width="148" height="77" fill="#999999"/>
<rect x="1466.81" y="776.15" width="147.9" height="154.1" fill="none" stroke="#ffffff" stroke-width="2.1"/>
<text x="1530" y="953" font-size="18.1" fill="#ffffff" textLength="21.2702" lengthAdjust="spacingAndGlyphs">60</text>
<rect x="1641.57" y="776" width="148" height="154.4" fill="#b3b3b3"/>
<rect x="1641.57" y="776" width="148" height="77" fill="#b5b3b0"/>
<rect x="1641.62" y="776.15" width="147.9" height="154.1" fill="none" stroke="#ffffff" stroke-width="2.1"/>
<text x="1704.81" y="953" font-size="18.1" fill="#ffffff" textLength="21.2702" lengthAdjust="spacingAndGlyphs">70</text>
<rect x="1816.38" y="776" width="148" height="154.4" fill="#cccccc"/>
<rect x="1816.38" y="776" width="148" height="77" fill="#cccccc"/>
<rect x="1816.43" y="776.15" width="147.9" height="154.1" fill="none" stroke="#ffffff" stroke-width="2.1"/>
<text x="1879.82" y="953" font-size="18.1" fill="#ffffff" textLength="21.0647" lengthAdjust="spacingAndGlyphs">80</text>
<rect x="1991.19" y="776" width="148" height="154.4" fill="#e6e6e6"/>
<rect x="1991.19" y="776" width="148" height="77" fill="#e6e5e4"/>
<rect x="1991.24" y="776.15" width="147.9" height="154.1" fill="none" stroke="#ffffff" stroke-width="2.1"/>
<text x="2054.53" y="953" font-size="18.1" fill="#ffffff" textLength="21.1669" lengthAdjust="spacingAndGlyphs">90</text>
<rect x="2166" y="776" width="148" height="154.4" fill="#ffffff"/>
<rect x="2166" y="776" width="148" height="77" fill="#ffffff"/>
<rect x="2166.05" y="776.15" width="147.9" height="154.1" fill="none" stroke="#ffffff" stroke-width="2.1"/>
<text x="2223.72" y="953" font-size="18.1" fill="#ffffff" textLength="31.8681" lengthAdjust="spacingAndGlyphs">100</text>
<text transform="translate(404.4,836.3) rotate(-90)" x="-0" y="0" font-size="18.4" fill="#ffffff" textLength="52.9259" lengthAdjust="spacingAndGlyphs">Actual</text>
<text transform="translate(404.4,923.1) rotate(-90)" x="-0.370962" y="0" font-size="18.4" fill="#ffffff" textLength="51.5521" lengthAdjust="spacingAndGlyphs">Target</text>
<text x="32.6087" y="1047" font-size="44.5" fill="#f2f2f2" textLength="336.263" lengthAdjust="spacingAndGlyphs">Current Reading</text>
<text x="33.9194" y="1112" font-size="39.3" fill="#f2f2f2" textLength="156.576" lengthAdjust="spacingAndGlyphs">x: 0,3133</text>
<text x="34.3" y="1173.6" font-size="39.3" fill="#f2f2f2" textLength="157.091" lengthAdjust="spacingAndGlyphs">y: 0,3301</text>
<text x="34.6222" y="1235.6" font-size="39.3" fill="#f2f2f2" textLength="168.046" lengthAdjust="spacingAndGlyphs">fL: 123,44</text>
<text x="33.408" y="1297.7" font-size="39.3" fill="#f2f2f2" textLength="243.359" lengthAdjust="spacingAndGlyphs">cd/m²: 422,95</text>
<rect x="509.3" y="999.3" width="445.1" height="326.7" fill="#e8e8e8"/>
<rect x="519.8" y="1009.6" width="423.9" height="309.4" fill="#333333"/>
<mask id="mkT"><rect x="577" y="1013.2" width="362.8" height="262.8" fill="url(#mTop)"/></mask>
<mask id="mkB"><rect x="577" y="1013.2" width="362.8" height="262.8" fill="url(#mBot)"/></mask>
<rect x="577" y="1013.2" width="362.8" height="262.8" fill="url(#cieM)"/>
<rect x="577" y="1013.2" width="362.8" height="262.8" fill="url(#cieH)" mask="url(#mkT)"/>
<rect x="577" y="1013.2" width="362.8" height="262.8" fill="url(#cieB)" mask="url(#mkB)"/>
<rect x="577" y="1013.2" width="362.8" height="262.8" fill="none" stroke="#8a8a8a" stroke-width="1.6"/>
<clipPath id="cpC"><rect x="577" y="1013.2" width="362.8" height="262.8"/></clipPath>
<path d="M621.5 1278.2L626.2 1274.5Q783.9 1151.45 938 1057.4L943 1054.3" fill="none" stroke="#000000" stroke-width="3.9" clip-path="url(#cpC)"/>
<line x1="567.1" y1="1035.2" x2="576.6" y2="1035.2" stroke="#dcdcdc" stroke-width="2.2" />
<text x="523.61" y="1043.6" font-size="21.8" fill="#dcdcdc" textLength="43.9225" lengthAdjust="spacingAndGlyphs">0,35</text>
<line x1="567.1" y1="1089" x2="576.6" y2="1089" stroke="#dcdcdc" stroke-width="2.2" />
<text x="523.616" y="1097.4" font-size="21.8" fill="#dcdcdc" textLength="43.573" lengthAdjust="spacingAndGlyphs">0,34</text>
<line x1="567.1" y1="1140.7" x2="576.6" y2="1140.7" stroke="#dcdcdc" stroke-width="2.2" />
<text x="523.61" y="1149.1" font-size="21.8" fill="#dcdcdc" textLength="43.9225" lengthAdjust="spacingAndGlyphs">0,33</text>
<line x1="567.1" y1="1192.3" x2="576.6" y2="1192.3" stroke="#dcdcdc" stroke-width="2.2" />
<text x="523.608" y="1200.7" font-size="21.8" fill="#dcdcdc" textLength="44.0402" lengthAdjust="spacingAndGlyphs">0,32</text>
<line x1="567.1" y1="1244.1" x2="576.6" y2="1244.1" stroke="#dcdcdc" stroke-width="2.2" />
<text x="523.608" y="1252.5" font-size="21.8" fill="#dcdcdc" textLength="44.0402" lengthAdjust="spacingAndGlyphs">0,31</text>
<line x1="591.6" y1="1276.8" x2="591.6" y2="1285.4" stroke="#e4e4e4" stroke-width="2.6" />
<text x="569.249" y="1308.8" font-size="21.8" fill="#dcdcdc" textLength="44.562" lengthAdjust="spacingAndGlyphs">0,29</text>
<line x1="664.2" y1="1276.8" x2="664.2" y2="1285.4" stroke="#e4e4e4" stroke-width="2.6" />
<text x="648.412" y="1308.8" font-size="21.8" fill="#dcdcdc" textLength="31.2917" lengthAdjust="spacingAndGlyphs">0,3</text>
<line x1="735.8" y1="1276.8" x2="735.8" y2="1285.4" stroke="#e4e4e4" stroke-width="2.6" />
<text x="713.449" y="1308.8" font-size="21.8" fill="#dcdcdc" textLength="44.562" lengthAdjust="spacingAndGlyphs">0,31</text>
<line x1="809" y1="1276.8" x2="809" y2="1285.4" stroke="#e4e4e4" stroke-width="2.6" />
<text x="786.649" y="1308.8" font-size="21.8" fill="#dcdcdc" textLength="44.562" lengthAdjust="spacingAndGlyphs">0,32</text>
<line x1="881.1" y1="1276.8" x2="881.1" y2="1285.4" stroke="#e4e4e4" stroke-width="2.6" />
<text x="858.751" y="1308.8" font-size="21.8" fill="#dcdcdc" textLength="44.4429" lengthAdjust="spacingAndGlyphs">0,33</text>
<rect x="746.9" y="1134" width="20.8" height="20.9" fill="#ffffff" stroke="#000000" stroke-width="2" fill-opacity="0.85"/>
<circle cx="744.5" cy="1144.6" r="6.3" fill="#1a1e1c" stroke="#000000" stroke-width="1.6"/>
<circle cx="768" cy="1136.2" r="6.2" fill="#cfcfcf" stroke="#000000" stroke-width="1.6"/>
<circle cx="767" cy="1136.6" r="6.2" fill="#dadada" stroke="#000000" stroke-width="1.6"/>
<circle cx="766" cy="1137" r="6.2" fill="#e4e4e4" stroke="#000000" stroke-width="1.6"/>
<circle cx="764.2" cy="1142.3" r="6.2" fill="#ececec" stroke="#000000" stroke-width="1.6"/>
<circle cx="762.6" cy="1140.4" r="6.2" fill="#f4f4f4" stroke="#000000" stroke-width="1.6"/>
<circle cx="761.1" cy="1138.7" r="6.1" fill="#ffffff" stroke="#000000" stroke-width="1.7"/>
<rect x="965" y="978.6" width="1328.2" height="318.2" fill="#111111"/>
<rect x="967" y="980.6" width="1324.2" height="41.9" fill="url(#thd)"/>
<text x="1248.85" y="1010.3" font-size="21.2" fill="#ffffff" textLength="11.9262" lengthAdjust="spacingAndGlyphs">0</text>
<text x="1346.62" y="1010.3" font-size="21.2" fill="#ffffff" textLength="24.9165" lengthAdjust="spacingAndGlyphs">10</text>
<text x="1445.51" y="1010.3" font-size="21.2" fill="#ffffff" textLength="24.3088" lengthAdjust="spacingAndGlyphs">20</text>
<text x="1543.85" y="1010.3" font-size="21.2" fill="#ffffff" textLength="23.9582" lengthAdjust="spacingAndGlyphs">30</text>
<text x="1642.38" y="1010.3" font-size="21.2" fill="#ffffff" textLength="23.6175" lengthAdjust="spacingAndGlyphs">40</text>
<text x="1740.03" y="1010.3" font-size="21.2" fill="#ffffff" textLength="24.0739" lengthAdjust="spacingAndGlyphs">50</text>
<text x="1837.91" y="1010.3" font-size="21.2" fill="#ffffff" textLength="24.3088" lengthAdjust="spacingAndGlyphs">60</text>
<text x="1936.01" y="1010.3" font-size="21.2" fill="#ffffff" textLength="24.3088" lengthAdjust="spacingAndGlyphs">70</text>
<text x="2034.43" y="1010.3" font-size="21.2" fill="#ffffff" textLength="24.0739" lengthAdjust="spacingAndGlyphs">80</text>
<text x="2132.62" y="1010.3" font-size="21.2" fill="#ffffff" textLength="24.1908" lengthAdjust="spacingAndGlyphs">90</text>
<text x="2224.14" y="1010.3" font-size="21.2" fill="#ffffff" textLength="36.9112" lengthAdjust="spacingAndGlyphs">100</text>
<rect x="967" y="1022.5" width="1324.2" height="39.2" fill="url(#trD)"/>
<text x="985.2" y="1051.7" font-size="23.4" fill="#ffffff" font-weight="bold" textLength="90.2" lengthAdjust="spacingAndGlyphs">x: CIE31</text>
<text x="1203.89" y="1051.7" font-size="23.3" fill="#ffffff" textLength="45.1923" lengthAdjust="spacingAndGlyphs">0,26</text>
<text x="1315.19" y="1051.7" font-size="23.3" fill="#ffffff" textLength="45.3134" lengthAdjust="spacingAndGlyphs">0,31</text>
<text x="1413.19" y="1051.7" font-size="23.3" fill="#ffffff" textLength="45.3134" lengthAdjust="spacingAndGlyphs">0,31</text>
<text x="1511.39" y="1051.7" font-size="23.3" fill="#ffffff" textLength="45.3134" lengthAdjust="spacingAndGlyphs">0,31</text>
<text x="1609.49" y="1051.7" font-size="23.3" fill="#ffffff" textLength="45.3134" lengthAdjust="spacingAndGlyphs">0,31</text>
<text x="1707.59" y="1051.7" font-size="23.3" fill="#ffffff" textLength="45.3134" lengthAdjust="spacingAndGlyphs">0,31</text>
<text x="1805.79" y="1051.7" font-size="23.3" fill="#ffffff" textLength="45.3134" lengthAdjust="spacingAndGlyphs">0,31</text>
<text x="1903.89" y="1051.7" font-size="23.3" fill="#ffffff" textLength="45.3134" lengthAdjust="spacingAndGlyphs">0,31</text>
<text x="2002.09" y="1051.7" font-size="23.3" fill="#ffffff" textLength="45.3134" lengthAdjust="spacingAndGlyphs">0,31</text>
<text x="2100.09" y="1051.7" font-size="23.3" fill="#ffffff" textLength="45.3134" lengthAdjust="spacingAndGlyphs">0,31</text>
<text x="2198.09" y="1051.7" font-size="23.3" fill="#ffffff" textLength="45.3134" lengthAdjust="spacingAndGlyphs">0,31</text>
<rect x="967" y="1061.7" width="1324.2" height="39.6" fill="url(#trL)"/>
<text x="985.2" y="1090.9" font-size="23.4" fill="#ececec" font-weight="bold" textLength="90.2" lengthAdjust="spacingAndGlyphs">y: CIE31</text>
<text x="1203.89" y="1090.9" font-size="23.3" fill="#ececec" textLength="45.1923" lengthAdjust="spacingAndGlyphs">0,25</text>
<text x="1315.19" y="1090.9" font-size="23.3" fill="#ececec" textLength="45.1923" lengthAdjust="spacingAndGlyphs">0,33</text>
<text x="1413.19" y="1090.9" font-size="23.3" fill="#ececec" textLength="45.1923" lengthAdjust="spacingAndGlyphs">0,33</text>
<text x="1511.39" y="1090.9" font-size="23.3" fill="#ececec" textLength="45.1923" lengthAdjust="spacingAndGlyphs">0,33</text>
<text x="1609.49" y="1090.9" font-size="23.3" fill="#ececec" textLength="45.1923" lengthAdjust="spacingAndGlyphs">0,33</text>
<text x="1707.59" y="1090.9" font-size="23.3" fill="#ececec" textLength="45.1923" lengthAdjust="spacingAndGlyphs">0,33</text>
<text x="1805.79" y="1090.9" font-size="23.3" fill="#ececec" textLength="45.1923" lengthAdjust="spacingAndGlyphs">0,33</text>
<text x="1903.89" y="1090.9" font-size="23.3" fill="#ececec" textLength="45.1923" lengthAdjust="spacingAndGlyphs">0,33</text>
<text x="2002.09" y="1090.9" font-size="23.3" fill="#ececec" textLength="45.1923" lengthAdjust="spacingAndGlyphs">0,33</text>
<text x="2100.09" y="1090.9" font-size="23.3" fill="#ececec" textLength="45.1923" lengthAdjust="spacingAndGlyphs">0,33</text>
<text x="2198.09" y="1090.9" font-size="23.3" fill="#ececec" textLength="45.1923" lengthAdjust="spacingAndGlyphs">0,33</text>
<rect x="967" y="1101.3" width="1324.2" height="39.2" fill="url(#trD)"/>
<text x="985.2" y="1130.5" font-size="23.4" fill="#ffffff" font-weight="bold" textLength="15" lengthAdjust="spacingAndGlyphs">Y</text>
<text x="1203.89" y="1130.5" font-size="23.3" fill="#ffffff" textLength="45.3134" lengthAdjust="spacingAndGlyphs">0,29</text>
<text x="1315.54" y="1130.5" font-size="23.3" fill="#ffffff" textLength="44.7141" lengthAdjust="spacingAndGlyphs">4,20</text>
<text x="1412.23" y="1130.5" font-size="23.3" fill="#ffffff" textLength="59.1366" lengthAdjust="spacingAndGlyphs">13,48</text>
<text x="1511.03" y="1130.5" font-size="23.3" fill="#ffffff" textLength="58.6449" lengthAdjust="spacingAndGlyphs">29,91</text>
<text x="1609.37" y="1130.5" font-size="23.3" fill="#ffffff" textLength="58.402" lengthAdjust="spacingAndGlyphs">54,99</text>
<text x="1707.47" y="1130.5" font-size="23.3" fill="#ffffff" textLength="58.1612" lengthAdjust="spacingAndGlyphs">89,90</text>
<text x="1804.84" y="1130.5" font-size="23.3" fill="#ffffff" textLength="71.9749" lengthAdjust="spacingAndGlyphs">132,33</text>
<text x="1902.93" y="1130.5" font-size="23.3" fill="#ffffff" textLength="72.0973" lengthAdjust="spacingAndGlyphs">186,27</text>
<text x="2001.73" y="1130.5" font-size="23.3" fill="#ffffff" textLength="71.369" lengthAdjust="spacingAndGlyphs">252,83</text>
<text x="2100.09" y="1130.5" font-size="23.3" fill="#ffffff" textLength="71.1295" lengthAdjust="spacingAndGlyphs">330,92</text>
<text x="2198.44" y="1130.5" font-size="23.3" fill="#ffffff" textLength="70.6553" lengthAdjust="spacingAndGlyphs">422,95</text>
<rect x="967" y="1140.5" width="1324.2" height="39.2" fill="url(#trL)"/>
<text x="985.2" y="1169.7" font-size="23.4" fill="#ececec" font-weight="bold" textLength="95.5" lengthAdjust="spacingAndGlyphs">Target Y</text>
<text x="1203.89" y="1169.7" font-size="23.3" fill="#ececec" textLength="45.0718" lengthAdjust="spacingAndGlyphs">0,00</text>
<text x="1315.54" y="1169.7" font-size="23.3" fill="#ececec" textLength="44.9519" lengthAdjust="spacingAndGlyphs">4,37</text>
<text x="1412.23" y="1169.7" font-size="23.3" fill="#ececec" textLength="59.0129" lengthAdjust="spacingAndGlyphs">14,00</text>
<text x="1511.38" y="1169.7" font-size="23.3" fill="#ececec" textLength="58.2814" lengthAdjust="spacingAndGlyphs">30,57</text>
<text x="1609.37" y="1169.7" font-size="23.3" fill="#ececec" textLength="58.1612" lengthAdjust="spacingAndGlyphs">56,20</text>
<text x="1707.35" y="1169.7" font-size="23.3" fill="#ececec" textLength="58.2814" lengthAdjust="spacingAndGlyphs">91,30</text>
<text x="1804.84" y="1169.7" font-size="23.3" fill="#ececec" textLength="71.9749" lengthAdjust="spacingAndGlyphs">134,73</text>
<text x="1902.94" y="1169.7" font-size="23.3" fill="#ececec" textLength="71.8529" lengthAdjust="spacingAndGlyphs">188,30</text>
<text x="2001.73" y="1169.7" font-size="23.3" fill="#ececec" textLength="71.4894" lengthAdjust="spacingAndGlyphs">255,39</text>
<text x="2100.09" y="1169.7" font-size="23.3" fill="#ececec" textLength="71.0104" lengthAdjust="spacingAndGlyphs">334,68</text>
<text x="2198.44" y="1169.7" font-size="23.3" fill="#ececec" textLength="70.6553" lengthAdjust="spacingAndGlyphs">422,95</text>
<rect x="967" y="1179.7" width="1324.2" height="39.2" fill="url(#trD)"/>
<text x="985.2" y="1208.9" font-size="23.4" fill="#ffffff" font-weight="bold" textLength="194" lengthAdjust="spacingAndGlyphs">Gamma Log/Log</text>
<text x="1202.92" y="1208.9" font-size="23.3" fill="#ffffff" textLength="46.1801" lengthAdjust="spacingAndGlyphs">1,28</text>
<text x="1314.83" y="1208.9" font-size="23.3" fill="#ffffff" textLength="45.6808" lengthAdjust="spacingAndGlyphs">2,02</text>
<text x="1412.84" y="1208.9" font-size="23.3" fill="#ffffff" textLength="45.1923" lengthAdjust="spacingAndGlyphs">2,14</text>
<text x="1511.03" y="1208.9" font-size="23.3" fill="#ffffff" textLength="45.6808" lengthAdjust="spacingAndGlyphs">2,19</text>
<text x="1609.13" y="1208.9" font-size="23.3" fill="#ffffff" textLength="45.5577" lengthAdjust="spacingAndGlyphs">2,23</text>
<text x="1707.23" y="1208.9" font-size="23.3" fill="#ffffff" textLength="45.5577" lengthAdjust="spacingAndGlyphs">2,25</text>
<text x="1805.43" y="1208.9" font-size="23.3" fill="#ffffff" textLength="45.6808" lengthAdjust="spacingAndGlyphs">2,27</text>
<text x="1903.53" y="1208.9" font-size="23.3" fill="#ffffff" textLength="45.5577" lengthAdjust="spacingAndGlyphs">2,28</text>
<text x="2001.73" y="1208.9" font-size="23.3" fill="#ffffff" textLength="45.6808" lengthAdjust="spacingAndGlyphs">2,31</text>
<text x="2099.73" y="1208.9" font-size="23.3" fill="#ffffff" textLength="45.5577" lengthAdjust="spacingAndGlyphs">2,38</text>
<text x="2197.73" y="1208.9" font-size="23.3" fill="#ffffff" textLength="45.6808" lengthAdjust="spacingAndGlyphs">2,27</text>
<rect x="967" y="1218.9" width="1324.2" height="39.6" fill="url(#trL)"/>
<text x="985.2" y="1248.1" font-size="23.4" fill="#ececec" font-weight="bold" textLength="44" lengthAdjust="spacingAndGlyphs">CCT</text>
<text x="1202.94" y="1248.1" font-size="23.3" fill="#ececec" textLength="97.7826" lengthAdjust="spacingAndGlyphs">18782,00</text>
<text x="1314.84" y="1248.1" font-size="23.3" fill="#ececec" textLength="84.2166" lengthAdjust="spacingAndGlyphs">6602,00</text>
<text x="1412.84" y="1248.1" font-size="23.3" fill="#ececec" textLength="84.2166" lengthAdjust="spacingAndGlyphs">6462,00</text>
<text x="1511.04" y="1248.1" font-size="23.3" fill="#ececec" textLength="84.2166" lengthAdjust="spacingAndGlyphs">6457,00</text>
<text x="1609.14" y="1248.1" font-size="23.3" fill="#ececec" textLength="84.2166" lengthAdjust="spacingAndGlyphs">6426,00</text>
<text x="1707.24" y="1248.1" font-size="23.3" fill="#ececec" textLength="84.2166" lengthAdjust="spacingAndGlyphs">6424,00</text>
<text x="1805.44" y="1248.1" font-size="23.3" fill="#ececec" textLength="84.2166" lengthAdjust="spacingAndGlyphs">6417,00</text>
<text x="1903.54" y="1248.1" font-size="23.3" fill="#ececec" textLength="84.2166" lengthAdjust="spacingAndGlyphs">6434,00</text>
<text x="2001.74" y="1248.1" font-size="23.3" fill="#ececec" textLength="84.2166" lengthAdjust="spacingAndGlyphs">6452,00</text>
<text x="2099.74" y="1248.1" font-size="23.3" fill="#ececec" textLength="84.2166" lengthAdjust="spacingAndGlyphs">6438,00</text>
<text x="2197.74" y="1248.1" font-size="23.3" fill="#ececec" textLength="84.2166" lengthAdjust="spacingAndGlyphs">6466,00</text>
<rect x="967" y="1258.5" width="1324.2" height="38.3" fill="url(#trD)"/>
<text x="985.2" y="1287.7" font-size="23.4" fill="#ffffff" font-weight="bold" textLength="94.5" lengthAdjust="spacingAndGlyphs">ΔE 2000</text>
<text x="1203.89" y="1287.7" font-size="23.3" fill="#ffffff" textLength="45.1923" lengthAdjust="spacingAndGlyphs">0,96</text>
<text x="1315.19" y="1287.7" font-size="23.3" fill="#ffffff" textLength="45.1923" lengthAdjust="spacingAndGlyphs">0,35</text>
<text x="1413.19" y="1287.7" font-size="23.3" fill="#ffffff" textLength="45.1923" lengthAdjust="spacingAndGlyphs">0,35</text>
<text x="1511.39" y="1287.7" font-size="23.3" fill="#ffffff" textLength="45.1923" lengthAdjust="spacingAndGlyphs">0,35</text>
<text x="1609.49" y="1287.7" font-size="23.3" fill="#ffffff" textLength="45.1923" lengthAdjust="spacingAndGlyphs">0,56</text>
<text x="1707.59" y="1287.7" font-size="23.3" fill="#ffffff" textLength="45.1923" lengthAdjust="spacingAndGlyphs">0,56</text>
<text x="1805.79" y="1287.7" font-size="23.3" fill="#ffffff" textLength="45.0718" lengthAdjust="spacingAndGlyphs">0,70</text>
<text x="1903.89" y="1287.7" font-size="23.3" fill="#ffffff" textLength="45.1923" lengthAdjust="spacingAndGlyphs">0,53</text>
<text x="2002.09" y="1287.7" font-size="23.3" fill="#ffffff" textLength="45.3134" lengthAdjust="spacingAndGlyphs">0,47</text>
<text x="2100.09" y="1287.7" font-size="23.3" fill="#ffffff" textLength="44.8327" lengthAdjust="spacingAndGlyphs">0,74</text>
<text x="2198.09" y="1287.7" font-size="23.3" fill="#ffffff" textLength="45.1923" lengthAdjust="spacingAndGlyphs">0,63</text>
<rect x="0" y="1329.6" width="2560" height="62.4" fill="url(#bbg)"/>
<rect x="0" y="1329.6" width="1519" height="62.4" fill="#2a2a2a"/>
<rect x="1519" y="1329.6" width="330" height="62.4" fill="url(#bfade)"/>
<rect x="1.3" y="1330" width="149.8" height="60.6" fill="url(#bbt)" rx="4.5"/>
<rect x="6.1" y="1335" width="140" height="36" fill="rgb(0,0,0)" rx="3"/>
<path d="M6.7 1370V1338.2a2.6 2.6 0 0 1 2.6-2.6H145.5" fill="none" stroke="#000000" stroke-opacity="0.28" stroke-width="1.4"/>
<text x="72.8387" y="1386.1" font-size="9.9" fill="#262626" font-weight="bold" textLength="6.53645" lengthAdjust="spacingAndGlyphs">0</text>
<rect x="153.23" y="1330" width="149.8" height="60.6" fill="url(#bbt)" rx="4.5"/>
<rect x="158.03" y="1335" width="140" height="36" fill="rgb(26,26,26)" rx="3"/>
<path d="M158.63 1370V1338.2a2.6 2.6 0 0 1 2.6-2.6H297.43" fill="none" stroke="#000000" stroke-opacity="0.28" stroke-width="1.4"/>
<text x="221.377" y="1386.1" font-size="9.9" fill="#262626" font-weight="bold" textLength="13.0413" lengthAdjust="spacingAndGlyphs">10</text>
<rect x="305.16" y="1330" width="149.8" height="60.6" fill="url(#bbt)" rx="4.5"/>
<rect x="309.96" y="1335" width="140" height="36" fill="rgb(51,51,51)" rx="3"/>
<path d="M310.56 1370V1338.2a2.6 2.6 0 0 1 2.6-2.6H449.36" fill="none" stroke="#000000" stroke-opacity="0.28" stroke-width="1.4"/>
<text x="373.668" y="1386.1" font-size="9.9" fill="#262626" font-weight="bold" textLength="12.6669" lengthAdjust="spacingAndGlyphs">20</text>
<rect x="457.09" y="1330" width="149.8" height="60.6" fill="url(#bbt)" rx="4.5"/>
<rect x="461.89" y="1335" width="140" height="36" fill="rgb(77,77,77)" rx="3"/>
<path d="M462.49 1370V1338.2a2.6 2.6 0 0 1 2.6-2.6H601.29" fill="none" stroke="#000000" stroke-opacity="0.28" stroke-width="1.4"/>
<text x="525.714" y="1386.1" font-size="9.9" fill="#262626" font-weight="bold" textLength="12.5468" lengthAdjust="spacingAndGlyphs">30</text>
<rect x="609.02" y="1330" width="149.8" height="60.6" fill="url(#bbt)" rx="4.5"/>
<rect x="613.82" y="1335" width="140" height="36" fill="rgb(102,102,102)" rx="3"/>
<path d="M614.42 1370V1338.2a2.6 2.6 0 0 1 2.6-2.6H753.22" fill="none" stroke="#000000" stroke-opacity="0.28" stroke-width="1.4"/>
<text x="677.702" y="1386.1" font-size="9.9" fill="#262626" font-weight="bold" textLength="12.4876" lengthAdjust="spacingAndGlyphs">40</text>
<rect x="760.95" y="1330" width="149.8" height="60.6" fill="url(#bbt)" rx="4.5"/>
<rect x="765.75" y="1335" width="140" height="36" fill="rgb(128,128,128)" rx="3"/>
<path d="M766.35 1370V1338.2a2.6 2.6 0 0 1 2.6-2.6H905.15" fill="none" stroke="#000000" stroke-opacity="0.28" stroke-width="1.4"/>
<text x="829.458" y="1386.1" font-size="9.9" fill="#262626" font-weight="bold" textLength="12.6669" lengthAdjust="spacingAndGlyphs">50</text>
<rect x="912.88" y="1330" width="149.8" height="60.6" fill="url(#bbt)" rx="4.5"/>
<rect x="917.68" y="1335" width="140" height="36" fill="rgb(153,153,153)" rx="3"/>
<path d="M918.28 1370V1338.2a2.6 2.6 0 0 1 2.6-2.6H1057.08" fill="none" stroke="#000000" stroke-opacity="0.28" stroke-width="1.4"/>
<text x="981.33" y="1386.1" font-size="9.9" fill="#262626" font-weight="bold" textLength="12.7278" lengthAdjust="spacingAndGlyphs">60</text>
<rect x="1064.81" y="1330" width="149.8" height="60.6" fill="url(#bbt)" rx="4.5"/>
<rect x="1069.61" y="1335" width="140" height="36" fill="rgb(179,179,179)" rx="3"/>
<path d="M1070.21 1370V1338.2a2.6 2.6 0 0 1 2.6-2.6H1209.01" fill="none" stroke="#000000" stroke-opacity="0.28" stroke-width="1.4"/>
<text x="1133.2" y="1386.1" font-size="9.9" fill="#262626" font-weight="bold" textLength="12.7893" lengthAdjust="spacingAndGlyphs">70</text>
<rect x="1216.74" y="1330" width="149.8" height="60.6" fill="url(#bbt)" rx="4.5"/>
<rect x="1221.54" y="1335" width="140" height="36" fill="rgb(204,204,204)" rx="3"/>
<path d="M1222.14 1370V1338.2a2.6 2.6 0 0 1 2.6-2.6H1360.94" fill="none" stroke="#000000" stroke-opacity="0.28" stroke-width="1.4"/>
<text x="1285.25" y="1386.1" font-size="9.9" fill="#262626" font-weight="bold" textLength="12.6669" lengthAdjust="spacingAndGlyphs">80</text>
<rect x="1368.67" y="1330" width="149.8" height="60.6" fill="url(#bbt)" rx="4.5"/>
<rect x="1373.47" y="1335" width="140" height="36" fill="rgb(230,230,230)" rx="3"/>
<path d="M1374.07 1370V1338.2a2.6 2.6 0 0 1 2.6-2.6H1512.87" fill="none" stroke="#000000" stroke-opacity="0.28" stroke-width="1.4"/>
<text x="1437.18" y="1386.1" font-size="9.9" fill="#262626" font-weight="bold" textLength="12.6669" lengthAdjust="spacingAndGlyphs">90</text>
<rect x="1520.6" y="1330" width="149.8" height="60.6" fill="url(#bsel)" rx="4.5"/>
<rect x="1525.4" y="1335" width="140" height="36" fill="rgb(255,255,255)" rx="3"/>
<text x="1585.66" y="1386.1" font-size="9.9" fill="#ffffff" font-weight="bold" textLength="19.2358" lengthAdjust="spacingAndGlyphs">100</text>
<rect x="2237" y="1330" width="48" height="60.8" rx="4.2" fill="url(#cbt2)"/>
<line x1="2237" y1="1348.3" x2="2285" y2="1348.3" stroke="#505050" stroke-width="1" />
<line x1="2237" y1="1349.3" x2="2285" y2="1349.3" stroke="#9a9a9a" stroke-width="1" />
<circle cx="2260.9" cy="1338.6" r="7.4" fill="url(#cci)"/>
<path d="M2256.6 1340.6h8.6l-4.3-4.2Z" fill="#2e2e2e"/>
<rect x="2246.7" y="1355.6" width="28.3" height="28.3" fill="url(#stp)" rx="3.6" stroke="#141414" stroke-width="2.2"/>
<rect x="2254.2" y="1363.1" width="13.9" height="13.7" fill="#000000"/>
<rect x="2254.2" y="1363.1" width="13.9" height="6.6" fill="#262626"/>
<rect x="2286.5" y="1330" width="45.2" height="29.5" fill="url(#cbt)"/>
<rect x="2332.7" y="1330" width="44.3" height="29.5" fill="url(#cbt)"/>
<rect x="2378" y="1330" width="43.8" height="29.5" fill="url(#cbt)"/>
<rect x="2422.8" y="1330" width="44" height="29.5" fill="url(#cbt)"/>
<rect x="2467.8" y="1330" width="43.9" height="29.5" fill="url(#cbt)"/>
<rect x="2512.7" y="1330" width="44.5" height="29.5" fill="#383838"/>
<circle cx="2536" cy="1345" r="10" fill="#2e2e2e"/>
<circle cx="2309" cy="1345" r="10" fill="url(#cci)"/>
<circle cx="2354.7" cy="1345" r="10" fill="url(#cci)"/>
<circle cx="2399.8" cy="1345" r="10" fill="url(#cci)"/>
<circle cx="2444.8" cy="1345" r="10" fill="url(#cci)"/>
<circle cx="2490" cy="1345" r="10" fill="url(#cci)"/>
<rect x="2305" y="1341" width="8" height="8" fill="#2e2e2e"/>
<path d="M2351.8 1341l8.5 4.8l-8.5 4.8Z" fill="#2e2e2e"/>
<path d="M2397 1341h-1.9v8.6h1.9M2403 1341h1.9v8.6h-1.9" fill="none" stroke="#2e2e2e" stroke-width="1.9"/>
<path d="M2397.6 1345h1.5M2400.6 1345h1.5" stroke="#2e2e2e" stroke-width="1.5"/>
<path d="M2444.9 1345c-1.7-3.1-6.3-3.1-6.3 0s4.6 3.1 6.3 0c1.7-3.1 6.3-3.1 6.3 0s-4.6 3.1-6.3 0Z" fill="none" stroke="#2e2e2e" stroke-width="1.7"/>
<path d="M2485.3 1343.8a5 5 0 0 1 8.6-2.4M2494.7 1346.2a5 5 0 0 1-8.6 2.4" fill="none" stroke="#2e2e2e" stroke-width="1.9"/>
<path d="M2495.6 1338.6v4.4h-4.4ZM2484.4 1351.4v-4.4h4.4Z" fill="#2e2e2e"/>
<path d="M2286 1386.5V1364.2a3.2 3.2 0 0 1 3.2-3.2H2422v28.8H2289.2a3.2 3.2 0 0 1-3.2-3.2Z" fill="url(#bn)"/>
<path d="M2423 1389.8V1361H2553.5a3.2 3.2 0 0 1 3.2 3.2V1386.6a3.2 3.2 0 0 1-3.2 3.2Z" fill="url(#bn)"/>
<line x1="2422.5" y1="1361" x2="2422.5" y2="1390" stroke="#404040" stroke-width="1" />
<circle cx="2316.7" cy="1375.8" r="10" fill="url(#cci)"/>
<circle cx="2530.5" cy="1375.8" r="10" fill="url(#cci)"/>
<path d="M2316 1371.6l-3.6 4.2l3.6 4.2M2320.6 1371.6l-3.6 4.2l3.6 4.2" fill="none" stroke="#2e2e2e" stroke-width="1.7"/>
<path d="M2526.6 1371.6l3.6 4.2l-3.6 4.2M2531.2 1371.6l3.6 4.2l-3.6 4.2" fill="none" stroke="#2e2e2e" stroke-width="1.7"/>
<text x="2341.52" y="1383.8" font-size="22.4" fill="#303030" textLength="52.3228" lengthAdjust="spacingAndGlyphs" stroke="#303030" stroke-width="0.5">Back</text>
<text x="2448.52" y="1383.8" font-size="22.4" fill="#303030" textLength="53.5125" lengthAdjust="spacingAndGlyphs" stroke="#303030" stroke-width="0.5">Next</text>
<rect x="2554" y="58" width="6" height="1334" fill="url(#rsh)"/>
</svg>
</body></html>
